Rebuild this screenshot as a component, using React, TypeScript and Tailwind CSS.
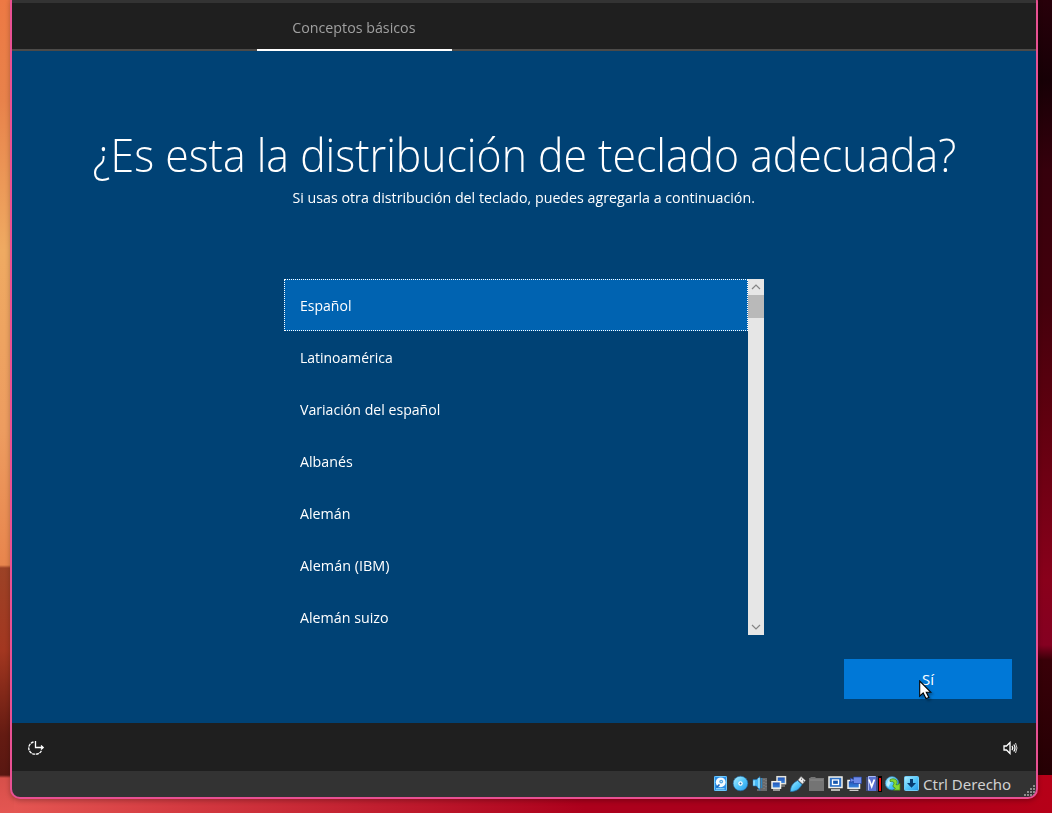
import React from "react";

const layouts = [
  { name: "Español", scale: "scale-x-[0.935]" },
  { name: "Latinoamérica", scale: "scale-x-[0.93]" },
  { name: "Variación del español", scale: "scale-x-[0.942]" },
  { name: "Albanés", scale: "scale-x-[0.95]" },
  { name: "Alemán", scale: "scale-x-[0.95]" },
  { name: "Alemán (IBM)", scale: "scale-x-[0.96]" },
  { name: "Alemán suizo", scale: "scale-x-[0.95]" },
];

function Chevron({ down = false }: { down?: boolean }) {
  return (
    <svg width="16" height="16" viewBox="0 0 16 16" fill="none" stroke="#858585" strokeWidth="1.2">
      <path d={down ? "M4 6l4 4 4-4" : "M4 10l4-4 4 4"} />
    </svg>
  );
}

function StatusIcons() {
  return (
    <svg width="206" height="18" viewBox="713 775 206 18" className="shrink-0">
      <defs>
        <linearGradient id="sky" x1="0" y1="0" x2="1" y2="1">
          <stop offset="0" stopColor="#b5f0ff" />
          <stop offset="0.5" stopColor="#55c8fa" />
          <stop offset="1" stopColor="#2498e8" />
        </linearGradient>
        <linearGradient id="screen" x1="0" y1="0" x2="0" y2="1">
          <stop offset="0" stopColor="#1d4fb4" />
          <stop offset="1" stopColor="#3d8ae0" />
        </linearGradient>
      </defs>
      {/* hard disk */}
      <rect x="714" y="776" width="13" height="15" rx="1" fill="#2b8ee8" />
      <rect x="714.5" y="776.5" width="12" height="14" rx="1" fill="none" stroke="#7fd8ff" strokeWidth=".8" />
      <circle cx="720.7" cy="782.3" r="4.9" fill="#f4fbff" />
      <circle cx="721.2" cy="781.6" r="1.9" fill="#4fa5e4" />
      <circle cx="721.2" cy="781.6" r=".7" fill="#fff" />
      <path d="M716.5 787.5l3-3" stroke="#1a66b8" strokeWidth="1.6" />
      <path d="M716 788.8h8.5" stroke="#a9ecff" />
      {/* optical disc */}
      <circle cx="740.5" cy="783.5" r="7.3" fill="url(#sky)" stroke="#1e6aa8" strokeWidth=".6" />
      <circle cx="740.5" cy="783.5" r="2.2" fill="#fff" />
      <circle cx="740.5" cy="783.5" r="1" fill="#286ca6" />
      {/* audio */}
      <path d="M760 778h7v13h-10v-2h3z" fill="#68696b" />
      <path d="M764 779v11M766 780v9" stroke="#8b8b8b" strokeDasharray="1 2" />
      <path d="M753 779.5h3.5l3.5-3v14l-3.5-4.5H753z" fill="#48b9f6" stroke="#2569a5" strokeWidth=".6" />
      <path d="M754 780.5v5M759 778v10" stroke="#a7ecff" strokeWidth="1.3" />
      <path d="M761.5 778v10" stroke="#2c86c4" strokeWidth="1.4" />
      {/* network */}
      <rect x="777" y="776.7" width="8.5" height="7" fill="url(#screen)" stroke="#e3e3dc" strokeWidth="1.5" />
      <path d="M779 786h6" stroke="#aaa" />
      <rect x="772" y="781.7" width="8.5" height="6.5" fill="url(#screen)" stroke="#f4f4ed" strokeWidth="1.5" />
      <path d="M773 790h7" stroke="#ddd" strokeWidth="1.2" />
      {/* usb */}
      <path d="M790.5 791.5c0-5 2-8 7-11l4.5 4c-3 5-6 7-11.5 7z" fill="url(#sky)" stroke="#2170ad" strokeWidth=".7" />
      <path d="M798 780l3-3.5 4.5 4-3 3.5z" fill="#ededee" stroke="#777" strokeWidth=".6" />
      <path d="M801 778.8l1 .8M803 780.8l1 .7" stroke="#444" />
      {/* shared folder */}
      <path d="M809 790v-12h1l1-1h4l1 1h8v13h-15z" fill="#747474" />
      <path d="M810 780h13" stroke="#8b8b8b" />
      {/* display */}
      <path d="M829 777h13v10.5h-13z" fill="#2d70c5" stroke="#f1f1ec" strokeWidth="1.5" />
      <rect x="832.5" y="780" width="6" height="4.5" fill="#1757ad" stroke="#fff" strokeWidth="1.3" />
      <path d="M831 790h9" stroke="#e4e4df" strokeWidth="1.5" />
      {/* recording */}
      <rect x="848" y="780.5" width="11.5" height="7.7" fill="url(#screen)" stroke="#f4f4ef" strokeWidth="1.5" />
      <path d="M849.5 790.3h9" stroke="#ddd" strokeWidth="1.2" />
      <path d="M850.5 778l3 1.5V777h8v6.5h-8v-2.5l-3 1.5z" fill="#6e8ae8" stroke="#2545a5" strokeWidth=".7" />
      {/* processor */}
      <path d="M867 777.5v14M877 777.5v14" stroke="#5268c8" strokeWidth="2" strokeDasharray="1 1" />
      <rect x="868" y="776" width="8" height="15" fill="#5970cf" />
      <path d="M868.5 790V776.5h7" fill="none" stroke="#a7b6f0" />
      <path d="M869 779.5l2.7 7 2.7-7" fill="none" stroke="#fff" strokeWidth="1.8" />
      <rect x="878" y="776" width="4" height="16" fill="#080000" />
      <rect x="879" y="778" width="2" height="13" fill="#f50d08" />
      {/* mouse integration */}
      <circle cx="892" cy="783.3" r="6.7" fill="url(#sky)" stroke="#2875a7" strokeWidth=".7" />
      <path d="M886.5 785l2-5 3-2-1 5-2 4z" fill="#eaffff" opacity=".6" />
      <path
        d="M890 779.5c3.500-1.500 6.500-.5 7 2 .3 1.500-.2 2.300-1 3.200l1.500 0 2.500-1.500v7h-6.500l1.800-2-2.300-1.500c-.5-1.500 1.200-2.400 1-3.700-.2-1.300-1.800-1.800-4-1.500z"
        fill="#84da32"
        stroke="#3c7819"
        strokeWidth=".7"
      />
      {/* keyboard capture */}
      <rect x="904.5" y="776.5" width="14" height="14" rx="1" fill="url(#sky)" stroke="#71cdf8" />
      <path d="M910 779h3v4h3l-4.5 4.7L907 783h3z" fill="#073c70" />
    </svg>
  );
}

function Pointer() {
  return (
    <svg
      width="16"
      height="22"
      viewBox="0 0 16 22"
      className="absolute left-[75px] top-[21px] drop-shadow-[2px_2px_1px_rgba(0,0,0,0.3)]"
    >
      <path d="M.7 1v15.2l3.500-3.300 2.800 5.700 2.900-1.200-2.600-5.200h4.400z" fill="#fff" stroke="#000" strokeWidth="1.1" />
    </svg>
  );
}

export default function App() {
  return (
    <div className="relative flex h-[813px] w-[1052px] overflow-hidden bg-[#d84444] font-['Open_Sans','Noto_Sans',sans-serif]">
      <div className="h-[813px] w-[14px] shrink-0 bg-[linear-gradient(180deg,#ed7944_0px,#e8824b_100px,#efaa62_250px,#ed9c60_430px,#e8854d_565px,#9c4226_568px,#a33720_650px,#641b12_735px,#591711_775px,#d7504a_778px,#e45652_813px)]" />
      <div className="flex h-[813px] grow flex-col">
        <div className="h-[775px] bg-[linear-gradient(180deg,#28000a_0px,#170006_80px,#36000c_170px,#43000c_300px,#60000f_420px,#89001b_580px,#850021_645px,#390008_660px,#250004_775px)]" />
        <div className="grow bg-[linear-gradient(90deg,#e45652_0%,#d53c42_15%,#ad001c_55%,#a8001c_75%,#b60018_100%)]" />
      </div>

      <main className="absolute -top-2 left-[10px] flex h-[807px] w-[1028px] flex-col overflow-hidden rounded-[10px] border-2 border-[#e95093] bg-[#333333] pt-[6px] shadow-[0_2px_5px_rgba(0,0,0,0.25)]">
        <div className="h-[3px] shrink-0 bg-[#333333]" />
        <header className="flex h-[48px] shrink-0 border-b-2 border-[#4c4a48] bg-[#1f1f1f] pl-[245px]">
          <div className="flex h-[48px] w-[195px] shrink-0 items-center justify-center border-b-2 border-white pt-[3px] text-[15px] text-[#a0a0a0]">
            <span className="relative -left-px scale-x-[0.95] whitespace-nowrap">Conceptos básicos</span>
          </div>
        </header>

        <section className="flex h-[672px] shrink-0 flex-col bg-[#004275] text-white">
          <h1 className="mt-[72px] flex h-[62px] items-center justify-center text-[46px] font-light leading-[62px]">
            <span className="scale-x-[0.93] whitespace-nowrap">¿Es esta la distribución de teclado adecuada?</span>
          </h1>
          <p className="flex h-[24px] justify-center text-[15px] leading-[24px]">
            <span className="scale-x-[0.949] whitespace-nowrap">
              Si usas otra distribución del teclado, puedes agregarla a continuación.
            </span>
          </p>

          <div className="ml-[272px] mt-[70px] flex h-[356px] w-[480px] shrink-0">
            <ul className="w-[464px] overflow-hidden text-[15px]">
              {layouts.map((item, i) => (
                <li
                  key={item.name}
                  className={
                    i === 0
                      ? "flex h-[52px] items-center border border-dotted border-white bg-[#0063b1] pl-[15px]"
                      : "flex h-[52px] items-center pl-[16px]"
                  }
                >
                  <span className={`origin-left whitespace-nowrap ${item.scale}`}>{item.name}</span>
                </li>
              ))}
            </ul>
            <div className="flex w-[16px] flex-col bg-[#e6e6e6]">
              <Chevron />
              <div className="h-[23px] bg-[#b9b9b9]" />
              <div className="grow" />
              <Chevron down />
            </div>
          </div>

          <div className="mt-[24px] flex justify-end pr-[24px]">
            <button className="relative h-[40px] w-[168px] bg-[#0078d7] text-[15px]">
              <span className="inline-block">Sí</span>
              <Pointer />
            </button>
          </div>
        </section>

        <div className="flex h-[48px] shrink-0 items-center justify-between bg-[#1f1f1f] pl-[15px] pr-[18px] pt-[2px]">
          <svg width="18" height="18" viewBox="0 0 18 18" fill="none" stroke="#fff" strokeWidth="1.3">
            <path d="M6.500 3A6.200 6.200 0 0 0 8.500 15.200 6.200 6.200 0 0 0 14.500 11.500" strokeDasharray="3 .7" />
            <path d="M8.500 2v6.500H16M14 6.500l2.200 2-2.200 2" />
          </svg>
          <svg width="15" height="14" viewBox="0 0 15 14" fill="none" stroke="#fff" strokeWidth="1.3">
            <path d="M1 5h2.500L7 1.500v11L3.500 9H1z" />
            <path d="M9 5q1.500 2 0 4M10.800 3.500q2.400 3.500 0 7" />
            <path d="M12.500 2q3 5 0 10" strokeWidth=".8" />
          </svg>
        </div>

        <footer className="relative flex h-[26px] shrink-0 items-center justify-end pr-[25px] text-[#d0d0d0]">
          <StatusIcons />
          <span className="ml-[4px] w-[88px] whitespace-nowrap font-['Noto_Sans','Open_Sans',sans-serif] text-[15px]">
            Ctrl Derecho
          </span>
          <svg width="12" height="12" viewBox="0 0 12 12" fill="#8c8c8c" className="absolute bottom-0 right-0">
            <path d="M9 0h2v2H9zM6 3h2v2H6zM9 3h2v2H9zM3 6h2v2H3zM6 6h2v2H6zM9 6h2v2H9zM0 9h2v2H0zM3 9h2v2H3zM6 9h2v2H6zM9 9h2v2H9z" />
          </svg>
        </footer>
      </main>
    </div>
  );
}
